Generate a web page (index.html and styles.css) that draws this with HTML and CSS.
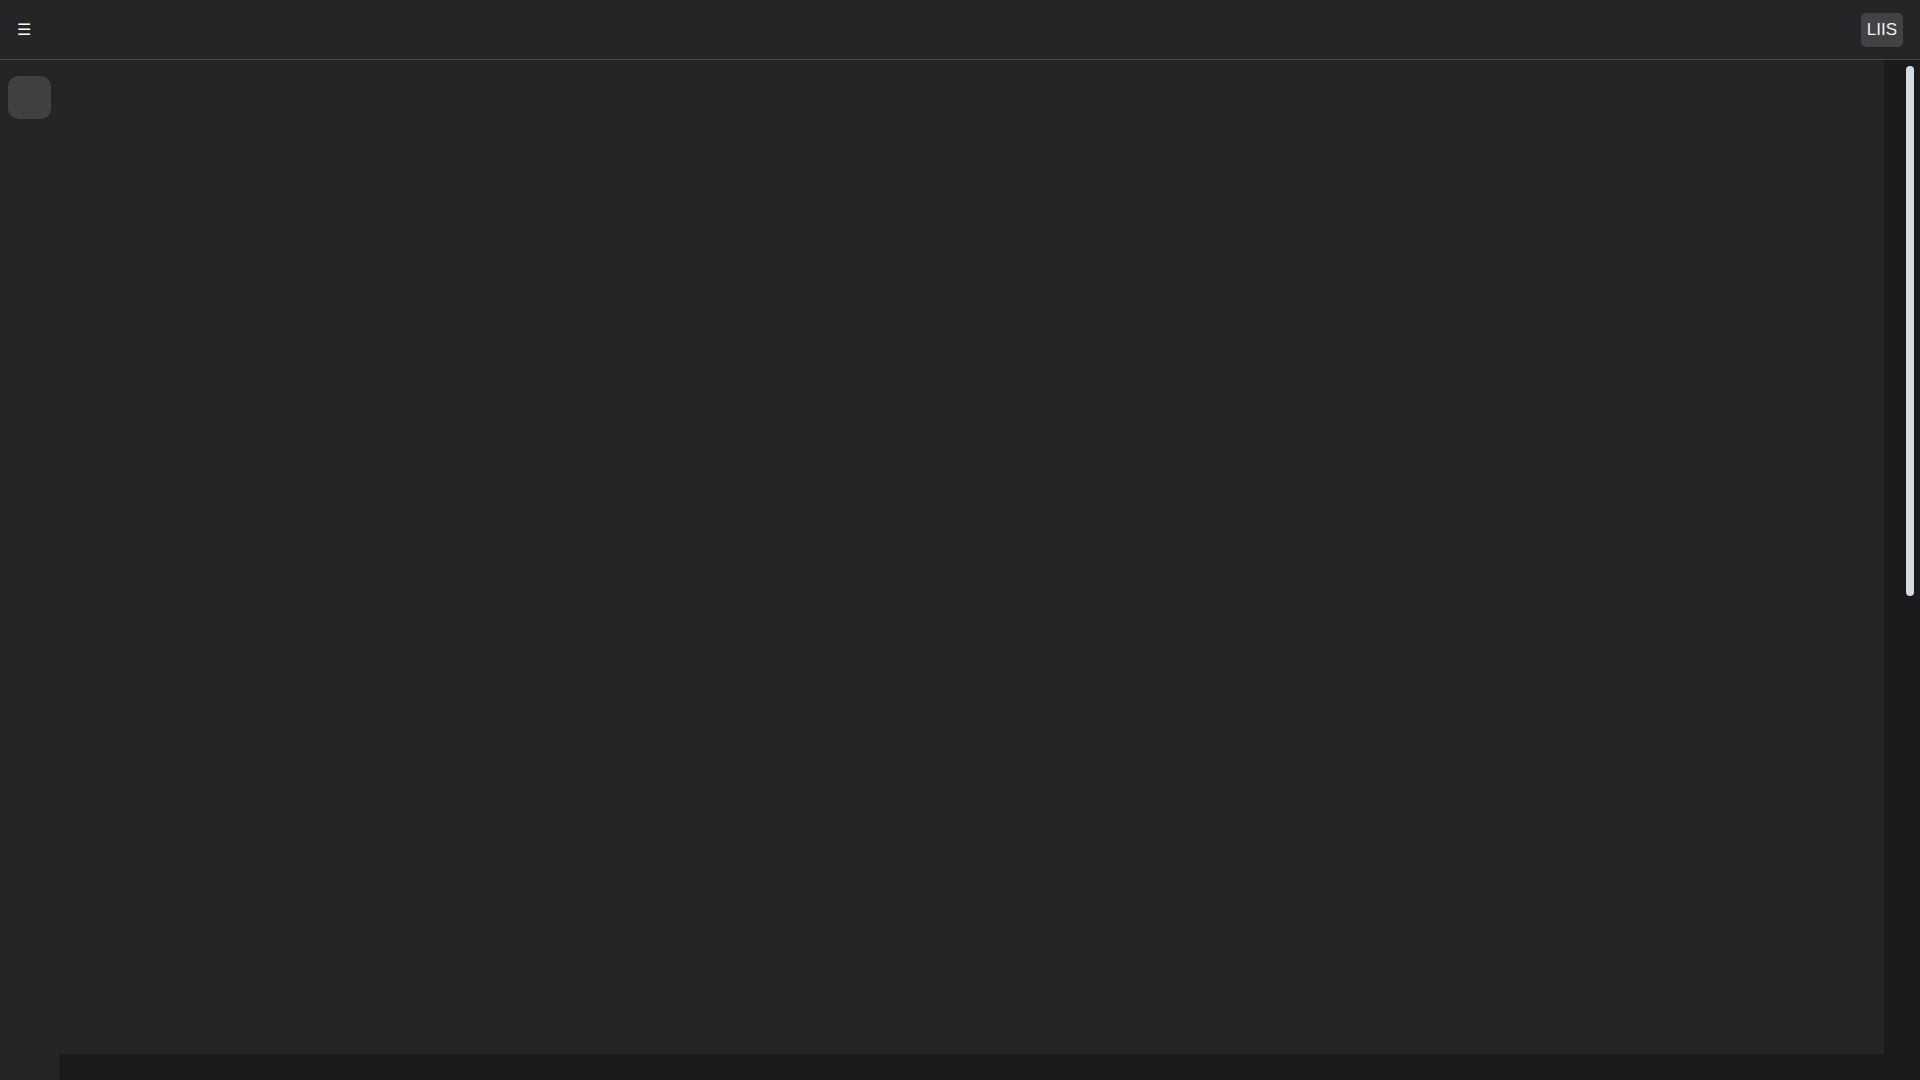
FILE: index.html
```html
<!DOCTYPE html>
<html>

<head>
    <title>LIIS</title>
    <meta charset="utf-8">
    <link rel="stylesheet" href="styles.css">
</head>

<body>
    <div class="top-bar">
        <span class="menu-btn">☰</span>
        <button class="user-btn">LIIS</button>
    </div>
    <div class="workspace">
        <div class="side-bar">
            <div class="tool-btn"></div>
        </div>
        <div class="canvas-area">
            <div class="canvas"></div>
            <div class="bottom-strip"></div>
        </div>
        <div class="scroll-col">
            <div class="scroll-thumb"></div>
        </div>
    </div>
</body>

</html>
```

FILE: styles.css
```css
html,
body {
    margin: 0;
    height: 100%;
    background-color: #242527;
    font-family: "Liberation Sans", Arial, sans-serif;
    overflow: hidden;
}

.top-bar {
    display: flex;
    align-items: center;
    justify-content: space-between;
    height: 59px;
    border-bottom: 1px solid #47484a;
    padding: 0 17px 0 17px;
}

.menu-btn {
    color: #fff;
    font-size: 16px;
    line-height: 16px;
    font-family: "DejaVu Sans", sans-serif;
    margin-top: 1px;
}

.user-btn {
    height: 34px;
    padding: 0 6px;
    border: none;
    border-radius: 5px;
    background-color: #414244;
    color: #f2f2f2;
    font-size: 17px;
    font-family: "Liberation Sans", Arial, sans-serif;
    margin-top: 1px;
}

.workspace {
    display: flex;
    height: 1020px;
}

.side-bar {
    width: 59px;
    padding: 16px 0 0 8px;
    box-sizing: border-box;
}

.tool-btn {
    width: 43px;
    height: 43px;
    border-radius: 10px;
    background-color: #3f4042;
}

.canvas-area {
    flex: 1;
    display: flex;
    flex-direction: column;
}

.canvas {
    flex: 1;
}

.bottom-strip {
    height: 26px;
    background-color: #1a1b1d;
}

.scroll-col {
    width: 36px;
    background-color: #1a1b1d;
    padding: 6px 0 0 22px;
    box-sizing: border-box;
}

.scroll-thumb {
    width: 8px;
    height: 530px;
    border-radius: 4px;
    background-color: #d6dce0;
}
```
